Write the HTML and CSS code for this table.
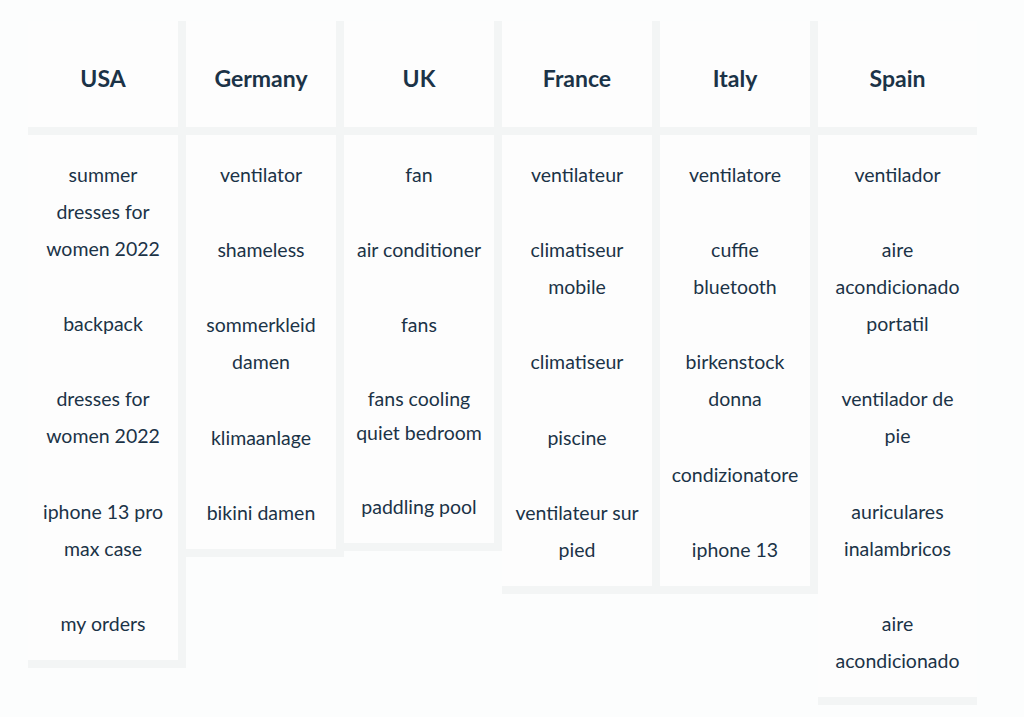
FILE: index.html
```html
<!DOCTYPE html>
<html lang="en">
<head>
<meta charset="utf-8">
<title>Top searches by country</title>
<link rel="stylesheet" href="styles.css">
</head>
<body>
<div class="board">
  <div class="col">
    <div class="head">USA</div>
    <div class="body">
      <div class="item">summer<br>dresses for<br>women 2022</div>
      <div class="item">backpack</div>
      <div class="item">dresses for<br>women 2022</div>
      <div class="item">iphone 13 pro<br>max case</div>
      <div class="item">my orders</div>
    </div>
  </div>
  <div class="col">
    <div class="head">Germany</div>
    <div class="body">
      <div class="item">ventilator</div>
      <div class="item">shameless</div>
      <div class="item">sommerkleid<br>damen</div>
      <div class="item">klimaanlage</div>
      <div class="item">bikini damen</div>
    </div>
  </div>
  <div class="col">
    <div class="head">UK</div>
    <div class="body">
      <div class="item">fan</div>
      <div class="item">air conditioner</div>
      <div class="item">fans</div>
      <div class="item tight">fans cooling<br>quiet bedroom</div>
      <div class="item">paddling pool</div>
    </div>
  </div>
  <div class="col">
    <div class="head">France</div>
    <div class="body">
      <div class="item">ventilateur</div>
      <div class="item">climatiseur<br>mobile</div>
      <div class="item">climatiseur</div>
      <div class="item">piscine</div>
      <div class="item">ventilateur sur<br>pied</div>
    </div>
  </div>
  <div class="col">
    <div class="head">Italy</div>
    <div class="body">
      <div class="item">ventilatore</div>
      <div class="item">cuffie<br>bluetooth</div>
      <div class="item">birkenstock<br>donna</div>
      <div class="item">condizionatore</div>
      <div class="item">iphone 13</div>
    </div>
  </div>
  <div class="col last">
    <div class="head">Spain</div>
    <div class="body">
      <div class="item">ventilador</div>
      <div class="item">aire<br>acondicionado<br>portatil</div>
      <div class="item">ventilador de<br>pie</div>
      <div class="item">auriculares<br>inalambricos</div>
      <div class="item">aire<br>acondicionado</div>
    </div>
  </div>
</div>
</body>
</html>
```

FILE: styles.css
```css
html, body {
  margin: 0;
  padding: 0;
  background: #fcfdfd;
}
body {
  font-family: Lato, "Noto Sans", sans-serif;
  color: #1b3347;
}
.board {
  display: flex;
  align-items: flex-start;
  padding: 21px 0 0 28px;
}
.col {
  width: 150px;
  border-right: 8px solid #f3f5f5;
  border-bottom: 8px solid #f3f5f5;
  background: #fdfdfd;
}
.col.last {
  width: 159px;
  border-right: none;
}
.head {
  height: 99px;
  padding-top: 7px;
  display: flex;
  align-items: center;
  justify-content: center;
  font-weight: 700;
  font-size: 23px;
  border-bottom: 8px solid #f3f5f5;
}
.item {
  text-align: center;
  font-size: 19.5px;
  line-height: 37px;
  padding: 20.5px 2px 17.9px;
}
.item.tight {
  line-height: 34px;
}
```
